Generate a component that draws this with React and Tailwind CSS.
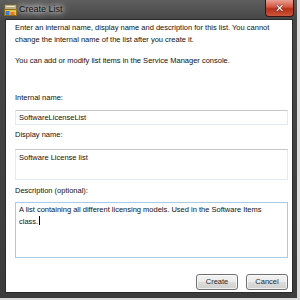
import React from "react";

function ListIcon() {
  return (
    <svg width="13" height="12" viewBox="0 0 13 12">
      <rect x="0.5" y="0.5" width="12" height="5" fill="#b9ab84" stroke="#6b6044" />
      <line x1="2" y1="2.5" x2="11" y2="2.5" stroke="#eee6c8" />
      <rect x="0.5" y="5.5" width="12" height="6" fill="#e9c24a" stroke="#8a6b1c" />
      <rect x="1.5" y="7" width="4" height="4" fill="#3b7fd0" />
      <rect x="6.5" y="8" width="4" height="3" fill="#e07a2a" />
    </svg>
  );
}

function CloseButton() {
  return (
    <div className="flex h-[17px] w-[29px] items-center justify-center rounded-b-[4px] border border-t-0 border-[#3a1410] bg-[linear-gradient(#e8a192_0%,#d2543e_45%,#b52f18_55%,#c9573c_100%)]">
      <span className="text-[11px] font-bold leading-none text-white [font-family:'DejaVu_Sans',sans-serif] [text-shadow:0_0_1px_#3a0d05,0_0_1px_#3a0d05]">
        ✕
      </span>
    </div>
  );
}

function Btn({ children }) {
  return (
    <button className="flex h-[16px] w-[42px] items-center justify-center rounded-[3px] border border-[#707070] bg-[linear-gradient(#f2f2f2_0%,#ebebeb_50%,#dddddd_51%,#cfcfcf_100%)] text-[7.5px] leading-none text-[#1e1e1e] shadow-[inset_0_0_0_1px_rgba(255,255,255,0.7)]">
      {children}
    </button>
  );
}

export default function App() {
  return (
    <div className="flex h-[300px] w-[300px] flex-col bg-[#dcdcdc] [font-family:'Liberation_Sans',Arial,sans-serif]">
      <div className="flex h-[298px] w-[297px] flex-col bg-[linear-gradient(#5e5e5e_0px,#474747_19px,#3c3c3c_100%)]">
        <div className="flex h-[19px] items-start">
          <div className="ml-[4px] mt-[4px]">
            <ListIcon />
          </div>
          <div className="ml-[2px] mt-[4px] text-[9px] leading-[11px] text-[#101010] [text-shadow:0_0_4px_#e0e0e0,0_0_6px_#d8d8d8,0_0_8px_#d0d0d0]">
            Create List
          </div>
          <div className="ml-auto mr-[3px]">
            <CloseButton />
          </div>
        </div>
        <div className="mb-[5px] ml-[5px] mr-[4px] flex flex-1 flex-col border border-[#2a2a2a] bg-white pl-[9px] pr-[4px] pt-[2px] text-[7.5px] text-[#111]">
          <p className="leading-[12px]">
            Enter an internal name, display name and description for this list. You cannot change the internal name of the list after you create it.
          </p>
          <p className="mt-[9px] leading-[12px]">
            You can add or modify list items in the Service Manager console.
          </p>
          <div className="mt-[25px] leading-[12px]">Internal name:</div>
          <div className="mt-[6px] flex h-[15px] items-center border border-[#e3e9ef] border-t-[#c8c8c8] px-[3px] leading-none">
            SoftwareLicenseList
          </div>
          <div className="mt-[4px] leading-[12px]">Display name:</div>
          <div className="mt-[8px] h-[31px] border border-[#e3e9ef] border-t-[#c8c8c8] px-[3px] pt-[2px] leading-[12px]">
            Software License list
          </div>
          <div className="mt-[5px] leading-[12px]">Description (optional):</div>
          <div className="mt-[5px] h-[56px] border border-[#a9cbe6] px-[3px] pt-[1px] leading-[11px]">
            A list containing all different licensing models. Used in the Software Items
            <br />
            class.
            <span className="ml-[1px] inline-block h-[9px] w-px translate-y-[1px] bg-black" />
          </div>
          <div className="mt-[16px] flex justify-end gap-[8px]">
            <Btn>Create</Btn>
            <Btn>Cancel</Btn>
          </div>
        </div>
      </div>
    </div>
  );
}
